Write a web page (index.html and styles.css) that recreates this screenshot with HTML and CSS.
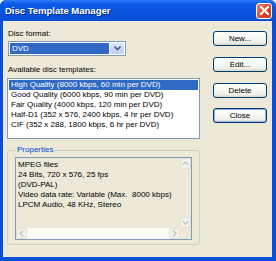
FILE: index.html
```html
<!DOCTYPE html>
<html lang="en">
<head>
  <meta charset="UTF-8">
  <title>Disc Template Manager</title>
  <link rel="stylesheet" href="styles.css">
</head>
<body>
  <div class="ventana">
    <div class="titulo">
      <span>Disc Template Manager</span>
      <div class="cerrar">
        <svg width="11" height="11" viewBox="0 0 11 11">
          <path d="M2 2 L9 9 M9 2 L2 9" stroke="#fff" stroke-width="2" stroke-linecap="square"/>
        </svg>
      </div>
    </div>

    <div class="cliente">
      <div class="izquierda">
        <label class="etiqueta">Disc format:</label>
        <div class="combo">
          <div class="combo-valor">DVD</div>
          <div class="combo-boton">
            <svg width="7" height="5" viewBox="0 0 7 5">
              <path d="M0.5 0.5 L3.5 3.5 L6.5 0.5" stroke="#4d6185" stroke-width="1.6" fill="none"/>
            </svg>
          </div>
        </div>

        <label class="etiqueta segunda">Available disc templates:</label>
        <div class="lista">
          <div class="item activo">High Quality (8000 kbps, 60 min per DVD)</div>
          <div class="item">Good Quality (6000 kbps, 90 min per DVD)</div>
          <div class="item">Fair Quality (4000 kbps, 120 min per DVD)</div>
          <div class="item">Half-D1 (352 x 576, 2400 kbps, 4 hr per DVD)</div>
          <div class="item">CIF (352 x 288, 1800 kbps, 6 hr per DVD)</div>
        </div>

        <fieldset class="grupo">
          <legend>Properties</legend>
          <div class="texto">
            <div class="texto-fila">
              <div class="texto-lineas">
                <div>MPEG files</div>
                <div>24 Bits, 720 x 576, 25 fps</div>
                <div>(DVD-PAL)</div>
                <div>Video data rate: Variable (Max.&nbsp; 8000 kbps)</div>
                <div>LPCM Audio, 48 KHz, Stereo</div>
              </div>
              <div class="scroll-v">
                <div class="flecha">
                  <svg width="7" height="5" viewBox="0 0 7 5"><path d="M0.5 4 L3.5 1 L6.5 4" stroke="#c9c7ba" stroke-width="1.4" fill="none"/></svg>
                </div>
                <div class="flecha">
                  <svg width="7" height="5" viewBox="0 0 7 5"><path d="M0.5 1 L3.5 4 L6.5 1" stroke="#c9c7ba" stroke-width="1.4" fill="none"/></svg>
                </div>
              </div>
            </div>
            <div class="scroll-h">
              <div class="flecha">
                <svg width="5" height="7" viewBox="0 0 5 7"><path d="M4 0.5 L1 3.5 L4 6.5" stroke="#c9c7ba" stroke-width="1.4" fill="none"/></svg>
              </div>
              <div class="flecha">
                <svg width="5" height="7" viewBox="0 0 5 7"><path d="M1 0.5 L4 3.5 L1 6.5" stroke="#c9c7ba" stroke-width="1.4" fill="none"/></svg>
              </div>
            </div>
          </div>
        </fieldset>
      </div>

      <div class="botones">
        <button>New...</button>
        <button>Edit...</button>
        <button>Delete</button>
        <button class="defecto">Close</button>
      </div>
    </div>
  </div>
</body>
</html>
```

FILE: styles.css
```css
body {
  margin: 0;
  background-color: #ffffff;
  font-family: 'Liberation Sans', Arial, sans-serif;
  font-size: 8px;
  color: #000000;
}

.ventana {
  width: 276px;
  height: 261px;
  box-sizing: border-box;
  display: flex;
  flex-direction: column;
  background-color: #0a4fdc;
  padding: 0 4px 4px 3px;
  border-radius: 6px 6px 0 0;
}

.titulo {
  height: 21px;
  margin: 0 -4px 0 -3px;
  padding: 0 4px 0 5px;
  display: flex;
  align-items: center;
  justify-content: space-between;
  background: linear-gradient(to bottom, #2c7cf4 0%, #0a5ae8 20%, #0853df 60%, #0a4fd6 100%);
  border-radius: 6px 6px 0 0;
  color: #ffffff;
  font-weight: bold;
  font-size: 9.5px;
  text-shadow: 1px 1px 0 #0a2a7a;
}

.cerrar {
  width: 16px;
  height: 16px;
  border: 1px solid #ffffff;
  border-radius: 3px;
  background: linear-gradient(to bottom right, #e9866b, #d6441f 60%, #c23a1c);
  display: flex;
  align-items: center;
  justify-content: center;
  box-sizing: border-box;
}

.cliente {
  flex: 1;
  background-color: #ece9d8;
  display: flex;
  padding: 8px 5px 0 4px;
  gap: 13px;
}

.izquierda {
  width: 193px;
  display: flex;
  flex-direction: column;
}

.etiqueta {
  display: block;
  margin-left: 1px;
  line-height: 10px;
  height: 11px;
}

.segunda {
  margin-top: 9px;
}

.combo {
  width: 118px;
  height: 15px;
  margin: 1px 0 0 1px;
  border: 1px solid #7f9db9;
  background-color: #ffffff;
  box-sizing: border-box;
  display: flex;
  padding: 1px;
}

.combo-valor {
  flex: 1;
  background-color: #316ac5;
  color: #ffffff;
  padding-left: 2px;
  line-height: 11px;
}

.combo-boton {
  width: 14px;
  margin-left: 1px;
  background: linear-gradient(to bottom, #dce6fc, #bccdf4);
  border-radius: 2px;
  display: flex;
  align-items: center;
  justify-content: center;
}

.lista {
  height: 61px;
  margin-top: 2px;
  border: 1px solid #7f9db9;
  background-color: #ffffff;
  box-sizing: border-box;
  padding: 1px;
}

.item {
  height: 10px;
  line-height: 10px;
  padding-left: 2px;
  white-space: nowrap;
}

.item.activo {
  background-color: #316ac5;
  color: #ffffff;
}

.grupo {
  margin: 6px 0 0 0;
  padding: 2px 7px 6px 7px;
  border: 1px solid #d0d0bf;
  border-radius: 3px;
  height: 100px;
  box-sizing: border-box;
}

.grupo legend {
  color: #0046d5;
  padding: 0 1px;
  margin-left: 1px;
  line-height: 10px;
}

.texto {
  height: 83px;
  border: 1px solid #7f9db9;
  background-color: #ece9d8;
  box-sizing: border-box;
  display: flex;
  flex-direction: column;
}

.texto-fila {
  flex: 1;
  display: flex;
}

.texto-lineas {
  flex: 1;
  padding: 2px 0 0 2px;
  line-height: 10px;
  white-space: nowrap;
}

.scroll-v {
  width: 11px;
  display: flex;
  flex-direction: column;
  justify-content: space-between;
}

.scroll-h {
  height: 11px;
  display: flex;
  justify-content: space-between;
  background-color: #fbfbf8;
  margin-right: 11px;
}

.flecha {
  width: 11px;
  height: 11px;
  background-color: #f3f2ea;
  border: 1px solid #e2e0d4;
  box-sizing: border-box;
  border-radius: 2px;
  display: flex;
  align-items: center;
  justify-content: center;
}

.botones {
  display: flex;
  flex-direction: column;
  gap: 11px;
  padding-top: 2px;
}

button {
  width: 54px;
  height: 15px;
  padding: 0;
  font-family: 'Liberation Sans', Arial, sans-serif;
  font-size: 8px;
  color: #000000;
  border: 1px solid #003c74;
  border-radius: 3px;
  background: linear-gradient(to bottom, #ffffff, #f0f0ea 80%, #d6d0c5);
}

button.defecto {
  box-shadow: inset 0 0 0 1px #97aee2;
  margin-top: -1px;
}
```
